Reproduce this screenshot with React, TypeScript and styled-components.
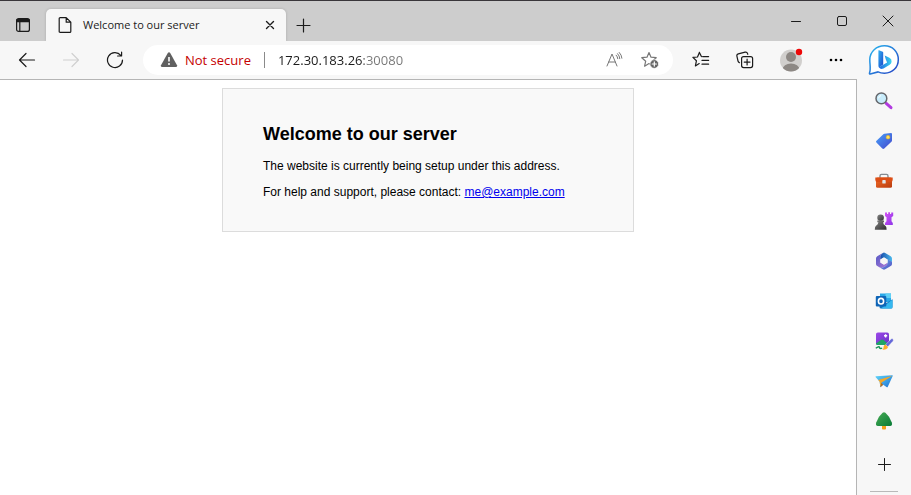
import React from "react";
import styled, { createGlobalStyle } from "styled-components";

const GlobalStyle = createGlobalStyle`
  * { box-sizing: border-box; }
  body { margin: 0; background: #fff; font-family: "Open Sans", "Noto Sans", sans-serif; color: #1b1b1b; }
  button { font: inherit; color: inherit; }
`;

const Browser = styled.div`
  display: flex;
  flex-direction: column;
  height: 100vh;
  overflow: hidden;
`;

const TitleBar = styled.header`
  display: flex;
  align-items: flex-end;
  flex: none;
  height: 41px;
  border-top: 1px solid #39363a;
  background: #cdcdcd;
`;

const IconButton = styled.button<{ $w: number; $h: number }>`
  display: flex;
  align-items: center;
  justify-content: center;
  flex: none;
  width: ${(p) => p.$w}px;
  height: ${(p) => p.$h}px;
  padding: 0;
  border: 0;
  background: none;
`;

const Tab = styled.div`
  display: flex;
  align-items: center;
  flex: 0 1 240px;
  height: 32px;
  padding: 0 4px 0 11px;
  border-radius: 5px 5px 0 0;
  background: #f7f7f7;
  box-shadow: 0 0 3px rgba(0, 0, 0, 0.18);
  clip-path: inset(-4px -4px 0 -4px);
`;

const TabTitle = styled.span`
  flex: 1;
  margin-left: 10px;
  font-size: 11px;
  line-height: 18px;
  white-space: nowrap;
`;

const WindowControls = styled.div`
  display: flex;
  align-self: flex-start;
  margin-left: auto;
`;

const Body = styled.div`
  display: flex;
  flex: 1;
  min-height: 0;
`;

const Main = styled.div`
  display: flex;
  flex: 1;
  flex-direction: column;
  min-width: 0;
`;

const Toolbar = styled.nav`
  display: flex;
  align-items: center;
  flex: none;
  height: 38px;
  padding-left: 5px;
  background: #f7f7f7;
`;

const AddressBar = styled.form`
  display: flex;
  align-items: center;
  flex: 1;
  min-width: 0;
  height: 30px;
  margin: 0 6px;
  padding: 0 5px 0 17px;
  border-radius: 15px;
  background: #fff;
`;

const SecurityButton = styled.button`
  display: flex;
  align-items: center;
  flex: none;
  gap: 7px;
  padding: 0;
  border: 0;
  background: none;
  color: #c50000;
  font-size: 13px;
  line-height: 20px;
`;

const Divider = styled.span`
  flex: none;
  width: 1px;
  height: 16px;
  margin: 0 13px;
  background: #8a8a8a;
`;

const UrlInput = styled.input`
  flex: 1;
  min-width: 0;
  height: 20px;
  padding: 0;
  border: 0;
  outline: 0;
  background: linear-gradient(90deg, #1b1b1b 86px, #767676 86px);
  background-clip: text;
  -webkit-background-clip: text;
  color: transparent;
  caret-color: #1b1b1b;
  font: 13px/20px "Open Sans", "Noto Sans", sans-serif;
`;

const Page = styled.main`
  flex: 1;
  min-height: 0;
  padding: 8px;
  border-top: 1px solid #b5b5b5;
  border-right: 1px solid #b5b5b5;
  background: #fff;
  font-family: Arial, "Liberation Sans", sans-serif;
  color: #000;
`;

const Card = styled.section`
  max-width: 412px;
  margin: 0 auto;
  padding: 35px 40px 32px;
  border: 1px solid #dcdcdc;
  background: #f9f9f9;
`;

const Heading = styled.h1`
  margin: 0 0 15px;
  font-size: 18px;
  line-height: 20px;
`;

const Text = styled.p`
  margin: 0;
  font-size: 12px;
  line-height: 14px;

  & + & { margin-top: 12px; }
`;

const MailLink = styled.a`
  color: #0000ee;
`;

const Sidebar = styled.aside`
  display: flex;
  flex-direction: column;
  align-items: center;
  flex: none;
  width: 54px;
  background: #f7f7f7;
`;

const SidebarRule = styled.hr`
  width: 28px;
  height: 1px;
  margin: 4px 0 0;
  border: 0;
  background: #b9b9b9;
`;

type StrokeProps = { size: number; color?: string; width?: number; children: React.ReactNode };
const Line = ({ size, color = "#1b1b1b", width = 1.2, children }: StrokeProps) => (
  <svg width={size} height={size} viewBox={`0 0 ${size} ${size}`} fill="none" stroke={color}
    strokeWidth={width} strokeLinecap="round" strokeLinejoin="round" aria-hidden="true">
    {children}
  </svg>
);

const Color = ({ size = 20, children }: { size?: number; children: React.ReactNode }) => (
  <svg width={size} height={size} viewBox={`0 0 ${size} ${size}`} aria-hidden="true">{children}</svg>
);

const STAR = "M8 1.5L10 6.2L15.2 6.7L11.3 10.2L12.4 15.2L8 12.6L3.6 15.2L4.7 10.2L0.8 6.7L6 6.2Z";

const Grad = ({ id, from, to, h = false }: { id: string; from: string; to: string; h?: boolean }) => (
  <linearGradient id={id} x1="0" y1="0" x2="1" y2={h ? "0" : "1"}>
    <stop offset="0" stopColor={from} /><stop offset="1" stopColor={to} />
  </linearGradient>
);

const BingIcon = () => (
  <Color size={32}>
    <defs>
      <Grad id="bubble" from="#27b6ee" to="#2540c4" />
      <Grad id="bLeft" from="#35b3f3" to="#1745c9" />
      <Grad id="bRight" from="#1a62e0" to="#3cd5ee" h />
    </defs>
    <path d="M16.5 .8C24.5 .8 30.3 6.6 30.3 14.4C30.3 22.4 24.5 28.2 16.5 28.2C14 28.2 11.8 27.8 10 26.9L2.2 28.9C1.6 29 1.3 28.6 1.5 28C3 24.4 1.8 19.8 1.8 14.6C1.8 6.6 8.5 .8 16.5 .8Z" fill="#fff" stroke="url(#bubble)" strokeWidth="1.5" />
    <path d="M11 5.2L14.7 6.8Q15.2 7 15.2 7.7V19.4L11 22.6Q10.4 21.6 10.4 20.4V5.5Q10.4 5 11 5.2Z" fill="url(#bLeft)" />
    <path d="M16.7 10.6L21.4 12.7Q23.9 13.9 23.6 16.7Q23.4 18.6 21.7 19.8L15.5 23.5Q12.5 24.9 10.9 22.2L19.1 17.4L17.8 14.4Z" fill="url(#bRight)" />
  </Color>
);

const SearchIcon = () => (
  <Color>
    <path d="M12.2 12.3L17 16.7" stroke="#b23be0" strokeWidth="3" strokeLinecap="round" />
    <circle cx="7.4" cy="7.4" r="5.4" fill="#c8ecfb" stroke="#65676c" strokeWidth="1.5" />
    <path d="M4.6 7.3Q4.8 4.9 7.1 4.6" stroke="#fff" strokeWidth="1" fill="none" />
  </Color>
);

const TagIcon = () => (
  <Color>
    <defs><Grad id="tag" from="#47a1fa" to="#4448cc" /></defs>
    <path d="M10.4 2.8L17 2.1Q18 2.1 18 3.1V9.4Q18 10.2 17.4 10.8L10.3 17.5Q9.3 18.3 8.3 17.4L2.4 11.5Q1.5 10.5 2.5 9.7L9.3 3.3Q9.8 2.9 10.4 2.8Z" fill="url(#tag)" />
    <circle cx="14" cy="6.2" r="1.9" fill="#ffe15a" stroke="#d8aa2e" strokeWidth=".6" />
  </Color>
);

const ToolboxIcon = () => (
  <Color>
    <defs><Grad id="box" from="#f16c27" to="#b93b0f" /></defs>
    <path d="M6 7V5Q6 3.4 7.5 3.4H12.5Q14 3.4 14 5V7" fill="none" stroke="#858b91" strokeWidth="1.4" />
    <rect x="2" y="6.4" width="16" height="10.4" rx="1.5" fill="url(#box)" />
    <path d="M1.3 6.5H18.7V9Q18.7 11 16.5 11H3.5Q1.3 11 1.3 9Z" fill="#dc4e16" />
    <rect x="8.3" y="9" width="3.4" height="3.6" rx=".7" fill="#e0e5e8" />
  </Color>
);

const GamesIcon = () => (
  <Color>
    <defs><Grad id="pawn" from="#858585" to="#2d2d2d" /><Grad id="rook" from="#d451f4" to="#8c37e8" /></defs>
    <path d="M11 1.4H13V3H14.2V1.2H16V3H17.2V1.4H19.2V5L17.5 6.2V10.2L18.8 12V14H11V12L12.5 10.2V6.2L11 5Z" fill="url(#rook)" />
    <circle cx="6.6" cy="6.8" r="3.3" fill="url(#pawn)" />
    <path d="M3.3 9.5H10V11.2H9Q9.1 13.1 11.6 15.1Q12.6 16 12.6 18.7H.8Q.8 16 1.8 15.1Q4.3 13.1 4.4 11.2H3.3Z" fill="url(#pawn)" />
  </Color>
);

const M365Icon = () => (
  <Color>
    <defs>
      <Grad id="mTop" from="#174ba9" to="#4bb9ed" h /><Grad id="mLeft" from="#5058c4" to="#b17bd8" /><Grad id="mRight" from="#58b8ec" to="#5a46c2" />
    </defs>
    <path d="M8.8 1.9Q10 1.2 11.2 1.9L16.7 5.2Q18 6 18 7.4V11L13.4 8.5L10 6.3L6.2 8.5V5.6Q6.3 3.3 8.8 1.9Z" fill="url(#mTop)" />
    <path d="M8.8 1.9L3.3 5.2Q2 6 2 7.4V13Q2 14.4 3.3 15.1L5.8 16.6Q8 17.4 10.2 16.1L13.6 13.8V11.6L10 13.7L6.3 11.6V5.6Q6.4 3.3 8.8 1.9Z" fill="url(#mLeft)" />
    <path d="M13.6 8.3L18 10.8V13Q18 14.4 16.7 15.1L11.2 18.3Q10 19 8.8 18.3L5.8 16.6Q8 17.2 10 16L12 14.8Q13.6 13.8 13.6 12Z" fill="url(#mRight)" />
    <path d="M10 6.7L13.4 8.6V11.7L10 13.6L6.6 11.7V8.6Z" fill="#f7f7f7" />
  </Color>
);

const OutlookIcon = () => (
  <Color>
    <path d="M6 2.5H17V11H6Z" fill="#29a8e8" /><path d="M11.5 2.5H17V7H11.5Z" fill="#5fd0f5" />
    <path d="M5.5 8.3L12 12.3L18.5 8.3V16Q18.5 17.5 17 17.5H7Q5.5 17.5 5.5 16Z" fill="#1276c4" />
    <path d="M18.5 8.5V16Q18.5 17.5 17 17.5H7Z" fill="#35b8ef" />
    <rect x="1.8" y="5" width="10.5" height="10.5" rx="1" fill="#0f65b7" />
    <ellipse cx="7" cy="10.2" rx="2.6" ry="2.8" fill="none" stroke="#fff" strokeWidth="1.6" />
  </Color>
);

const DesignerIcon = () => (
  <Color>
    <defs><Grad id="pic" from="#9c48e8" to="#6a31c8" /></defs>
    <rect x="2" y="1.5" width="13" height="12.5" rx="1.8" fill="url(#pic)" />
    <path d="M2 12.5L7.2 8.8Q8.3 8 9.6 9L13.6 12.4Q13 14 11 14H3.7Q2 14 2 12.5Z" fill="#20a566" />
    <path d="M11.6 3.2V6.4M10 4.8H13.2" stroke="#fff" strokeWidth="1.4" />
    <path d="M1.8 17.2Q5 14.9 5.4 16.2Q5.4 18 8.2 17.2" fill="none" stroke="#189556" strokeWidth="1.4" />
    <path d="M18.9 7.9Q20 9 18.9 10.3L13.8 15.8L11.6 13.6L17.1 8Q18 7.1 18.9 7.9Z" fill="#6568d9" stroke="#f7f7f7" strokeWidth=".4" />
    <path d="M11.4 13.5L14 16Q13.2 19 8.4 18.7Q9.8 17.6 9.6 15.8Q9.9 13.9 11.4 13.5Z" fill="#ffad2c" />
  </Color>
);

const DropIcon = () => (
  <Color>
    <defs><Grad id="plane" from="#60d6fa" to="#1c6fd2" /></defs>
    <path d="M2 5.2L18.2 4.2Q19.2 4.2 18.6 5.2L13.8 15.7Q13.4 16.6 12.5 16L9.2 13.8L6.4 16.2L5.6 10.6L1.7 6.3Q1.1 5.4 2 5.2Z" fill="url(#plane)" />
    <path d="M18.3 4.7L4.2 9L5.7 10.7L6.4 16.2L7.3 11.8Z" fill="#f3a728" />
    <path d="M7.3 11.8L6.4 16.2L9.2 13.8Z" fill="#b56b20" />
  </Color>
);

const TreeIcon = () => (
  <Color>
    <defs><Grad id="tree" from="#49ac55" to="#087b36" /></defs>
    <path d="M8 14H12V17.5Q12 18.4 11.1 18.4H8.9Q8 18.4 8 17.5Z" fill="#f4a21d" />
    <path d="M8.6 1.8Q10 .5 11.4 1.8L15 5.8L17.8 11.4Q18.8 14.8 16 15H4Q1.2 14.8 2.2 11.4L5 5.8Z" fill="url(#tree)" />
  </Color>
);

const apps: [string, React.ReactNode][] = [
  ["Search", <SearchIcon />], ["Shopping", <TagIcon />], ["Tools", <ToolboxIcon />],
  ["Games", <GamesIcon />], ["Microsoft 365", <M365Icon />], ["Outlook", <OutlookIcon />],
  ["Image Creator", <DesignerIcon />], ["Drop", <DropIcon />], ["E-tree", <TreeIcon />],
];

export default function App() {
  return (
    <Browser>
      <GlobalStyle />
      <TitleBar>
        <IconButton $w={46} $h={32} aria-label="Tab actions">
          <Line size={16}><rect x="1.6" y="1.6" width="12.8" height="12.8" rx="2" /><path d="M2 2.5H14V4.6H2Z" fill="#1b1b1b" /><path d="M4.8 5V14" /></Line>
        </IconButton>
        <Tab>
          <Line size={16}><path d="M3.2 .6H9.2L13.8 5.2V14.4Q13.8 15.4 12.8 15.4H3.2Q2.2 15.4 2.2 14.4V1.6Q2.2 .6 3.2 .6ZM9.2 .6V5.2H13.8" /></Line>
          <TabTitle>Welcome to our server</TabTitle>
          <IconButton $w={24} $h={24} aria-label="Close tab">
            <Line size={10} width={1.4}><path d="M1.5 1.5L8.5 8.5M8.5 1.5L1.5 8.5" /></Line>
          </IconButton>
        </Tab>
        <IconButton $w={35} $h={32} aria-label="New tab">
          <Line size={15}><path d="M7.5 1V14M1 7.5H14" /></Line>
        </IconButton>
        <WindowControls>
          <IconButton $w={46} $h={40} aria-label="Minimize"><Line size={12} width={1}><path d="M1.5 6.5H10.5" /></Line></IconButton>
          <IconButton $w={46} $h={40} aria-label="Maximize"><Line size={12} width={1}><rect x="1.5" y="1.5" width="9" height="9" rx="1.5" /></Line></IconButton>
          <IconButton $w={46} $h={40} aria-label="Close"><Line size={12} width={1}><path d="M1 1L11 11M11 1L1 11" /></Line></IconButton>
        </WindowControls>
      </TitleBar>
      <Body>
        <Main>
          <Toolbar>
            <IconButton $w={44} $h={36} aria-label="Back"><Line size={18}><path d="M16.5 9H1.5M8 2.5L1.5 9L8 15.5" /></Line></IconButton>
            <IconButton $w={44} $h={36} aria-label="Forward" disabled><Line size={18} color="#d0d0d0"><path d="M1.5 9H16.5M10 2.5L16.5 9L10 15.5" /></Line></IconButton>
            <IconButton $w={44} $h={36} aria-label="Refresh"><Line size={18}><path d="M16.5 9A7.5 7.5 0 1 1 14.8 4.3M15.6 1.2V5H11.6" /></Line></IconButton>
            <AddressBar onSubmit={(e) => e.preventDefault()}>
              <SecurityButton type="button">
                <Color size={18}>
                  <path d="M7.8 2Q9 .7 10.2 2L17 14.2Q17.6 16 16 16H2Q.4 16 1 14.2Z" fill="#606060" />
                  <path d="M9 6V10.5" stroke="#fff" strokeWidth="1.6" /><circle cx="9" cy="13" r="1" fill="#fff" />
                </Color>
                Not secure
              </SecurityButton>
              <Divider />
              <UrlInput aria-label="Address" defaultValue="172.30.183.26:30080" spellCheck={false} />
              <IconButton type="button" $w={36} $h={28} aria-label="Read aloud">
                <Line size={18} color="#777"><path d="M2 15L7 3L12 15M3.7 11H10.3M11.2 4.2Q12.6 5.6 12.8 7.7M12.6 2.7Q14.7 4.9 14.8 7.7M14.3 1.5Q16.7 4 16.9 7.2" strokeWidth="1" /></Line>
              </IconButton>
              <IconButton type="button" $w={36} $h={28} aria-label="Add to favorites">
                <Line size={18} color="#777"><path d={STAR} /><circle cx="13.3" cy="13" r="4.3" fill="#666" stroke="#fff" strokeWidth=".6" /><path d="M11.2 13H15.4M13.3 10.9V15.1" stroke="#fff" /></Line>
              </IconButton>
            </AddressBar>
            <IconButton $w={44} $h={36} aria-label="Favorites">
              <Line size={18}><path d="M7.4 1.4L5.5 6L.9 6.4L4.4 9.8L3.4 14.9L7.2 12.6M7.4 1.4L9.4 5.6M10.6 5.6H16.6M10 9.4H16.6M10 13.2H16.6" /></Line>
            </IconButton>
            <IconButton $w={44} $h={36} aria-label="Collections">
              <Line size={18}><rect x="5.6" y="5.6" width="11" height="11" rx="2" /><path d="M11.1 8.2V14M8.2 11.1H14M3.5 11.7Q2.3 11.2 2 10L.9 5.2Q.5 3.4 2.3 2.9L9.1 1.2Q11 .8 11.6 2.6L11.8 3.3" /></Line>
            </IconButton>
            <IconButton $w={48} $h={36} aria-label="Profile">
              <Color size={24}>
                <defs><clipPath id="avatar"><circle cx="12" cy="12.5" r="11" /></clipPath></defs>
                <circle cx="12" cy="12.5" r="11" fill="#d1cfcd" />
                <g clipPath="url(#avatar)" fill="#8d8884"><circle cx="12" cy="9" r="5" /><ellipse cx="12" cy="21.5" rx="8.5" ry="6" /></g>
                <circle cx="20" cy="4" r="3.2" fill="#ed0808" />
              </Color>
            </IconButton>
            <IconButton $w={42} $h={36} aria-label="Settings and more">
              <Color size={16}><circle cx="3" cy="8" r="1.3" /><circle cx="8" cy="8" r="1.3" /><circle cx="13" cy="8" r="1.3" /></Color>
            </IconButton>
          </Toolbar>
          <Page>
            <Card>
              <Heading>Welcome to our server</Heading>
              <Text>The website is currently being setup under this address.</Text>
              <Text>For help and support, please contact: <MailLink href="mailto:me@example.com">me@example.com</MailLink></Text>
            </Card>
          </Page>
        </Main>
        <Sidebar>
          <IconButton $w={44} $h={40} aria-label="Bing"><BingIcon /></IconButton>
          {apps.map(([name, icon]) => (
            <IconButton key={name} $w={44} $h={40} aria-label={name}>{icon}</IconButton>
          ))}
          <IconButton $w={44} $h={46} aria-label="Customize sidebar">
            <Line size={13} width={1}><path d="M6.5 .5V12.5M.5 6.5H12.5" /></Line>
          </IconButton>
          <SidebarRule />
        </Sidebar>
      </Body>
    </Browser>
  );
}
